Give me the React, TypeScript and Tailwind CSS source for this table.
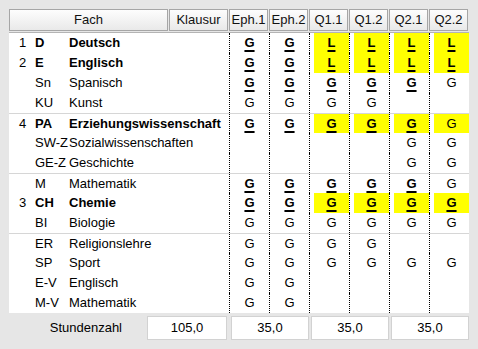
import React from 'react'

type Grade = '' | 'G' | 'g' | 'L'
// 'G' = schriftlich (fett, unterstrichen), 'g' = mündlich, 'L' = LK (fett, unterstrichen)

type Row = {
  num?: string
  code: string
  name: string
  bold?: boolean
  groupStart?: boolean
  grades: Grade[]
  yellow?: boolean
}

const columns = ['Eph.1', 'Eph.2', 'Q1.1', 'Q1.2', 'Q2.1', 'Q2.2']

const rows: Row[] = [
  { num: '1', code: 'D', name: 'Deutsch', bold: true, grades: ['G', 'G', 'L', 'L', 'L', 'L'], yellow: true },
  { num: '2', code: 'E', name: 'Englisch', bold: true, grades: ['G', 'G', 'L', 'L', 'L', 'L'], yellow: true },
  { code: 'Sn', name: 'Spanisch', grades: ['G', 'G', 'G', 'G', 'G', 'g'] },
  { code: 'KU', name: 'Kunst', grades: ['g', 'g', 'g', 'g', '', ''] },
  { num: '4', code: 'PA', name: 'Erziehungswissenschaft', bold: true, groupStart: true, grades: ['G', 'G', 'G', 'G', 'G', 'g'], yellow: true },
  { code: 'SW-Z', name: 'Sozialwissenschaften', grades: ['', '', '', '', 'g', 'g'] },
  { code: 'GE-Z', name: 'Geschichte', grades: ['', '', '', '', 'g', 'g'] },
  { code: 'M', name: 'Mathematik', groupStart: true, grades: ['G', 'G', 'G', 'G', 'G', 'g'] },
  { num: '3', code: 'CH', name: 'Chemie', bold: true, grades: ['G', 'G', 'G', 'G', 'G', 'G'], yellow: true },
  { code: 'BI', name: 'Biologie', grades: ['g', 'g', 'g', 'g', 'g', 'g'] },
  { code: 'ER', name: 'Religionslehre', groupStart: true, grades: ['g', 'g', 'g', 'g', '', ''] },
  { code: 'SP', name: 'Sport', grades: ['g', 'g', 'g', 'g', 'g', 'g'] },
  { code: 'E-V', name: 'Englisch', grades: ['g', 'g', '', '', '', ''] },
  { code: 'M-V', name: 'Mathematik', grades: ['g', 'g', '', '', '', ''] },
]

function GradeText({ g }: { g: Grade }) {
  if (!g) return null
  if (g === 'g') return <span>G</span>
  return <span className="font-bold underline decoration-2 underline-offset-[3px]">{g}</span>
}

function HeaderCell({ label, width }: { label: string; width: string }) {
  return (
    <div className={`${width} shrink-0 pr-px`}>
      <div className="h-[22px] border border-[#a6a6a6] bg-linear-to-b from-[#fdfdfd] to-[#e9e9e9] flex items-center justify-center text-[13px] text-[#111]">
        {label}
      </div>
    </div>
  )
}

export default function App() {
  return (
    <div
      className="w-[478px] h-[349px] bg-[#e6e6e6] pt-[9px] pl-[9px] text-black"
      style={{ fontFamily: '"Liberation Sans", Arial, sans-serif' }}
    >
      {/* Kopfzeile */}
      <div className="flex w-[460px]">
        <HeaderCell label="Fach" width="w-[160px]" />
        <HeaderCell label="Klausur" width="w-[60px]" />
        {columns.map((c) => (
          <HeaderCell key={c} label={c} width="w-[40px]" />
        ))}
      </div>

      {/* Tabelle */}
      <div className="mt-px w-[460px] bg-white border-t border-[#b4b4b4] text-[13px]">
        {rows.map((r, i) => (
          <div
            key={i}
            className={`flex h-[20px] ${r.groupStart ? 'border-t border-[#d6d6d6]' : ''}`}
          >
            <div className="w-[160px] shrink-0 flex items-center">
              <span className="w-[26px] shrink-0 pl-[10px]">{r.num}</span>
              <span className={`w-[34px] shrink-0 whitespace-nowrap ${r.bold ? 'font-bold' : ''}`}>{r.code}</span>
              <span className={`shrink-0 whitespace-nowrap ${r.bold ? 'font-bold' : ''}`}>{r.name}</span>
            </div>
            <div className="w-[60px] shrink-0" />
            {r.grades.map((g, j) => {
              const yellow = r.yellow && j >= 2
              return (
                <div key={j} className="w-[40px] shrink-0 border-l border-dotted border-black pl-[4px]">
                  <div
                    className={`h-full flex items-center justify-center ${yellow ? 'bg-[#ffff00]' : ''} ${j < 2 ? '-ml-[4px]' : ''}`}
                  >
                    <GradeText g={g} />
                  </div>
                </div>
              )
            })}
          </div>
        ))}
      </div>

      {/* Stundenzahl */}
      <div className="flex items-center mt-[3px] h-[24px] w-[460px] text-[13px]">
        <div className="w-[138px] shrink-0 text-right pr-[25px]">Stundenzahl</div>
        <div className="w-[80px] h-[24px] bg-white border border-[#d2d2d2] flex items-center justify-center">105,0</div>
        <div className="ml-[4px] w-[78px] h-[24px] bg-white border border-[#d2d2d2] flex items-center justify-center">35,0</div>
        <div className="ml-[2px] w-[78px] h-[24px] bg-white border border-[#d2d2d2] flex items-center justify-center">35,0</div>
        <div className="ml-[2px] w-[78px] h-[24px] bg-white border border-[#d2d2d2] flex items-center justify-center">35,0</div>
      </div>
    </div>
  )
}
